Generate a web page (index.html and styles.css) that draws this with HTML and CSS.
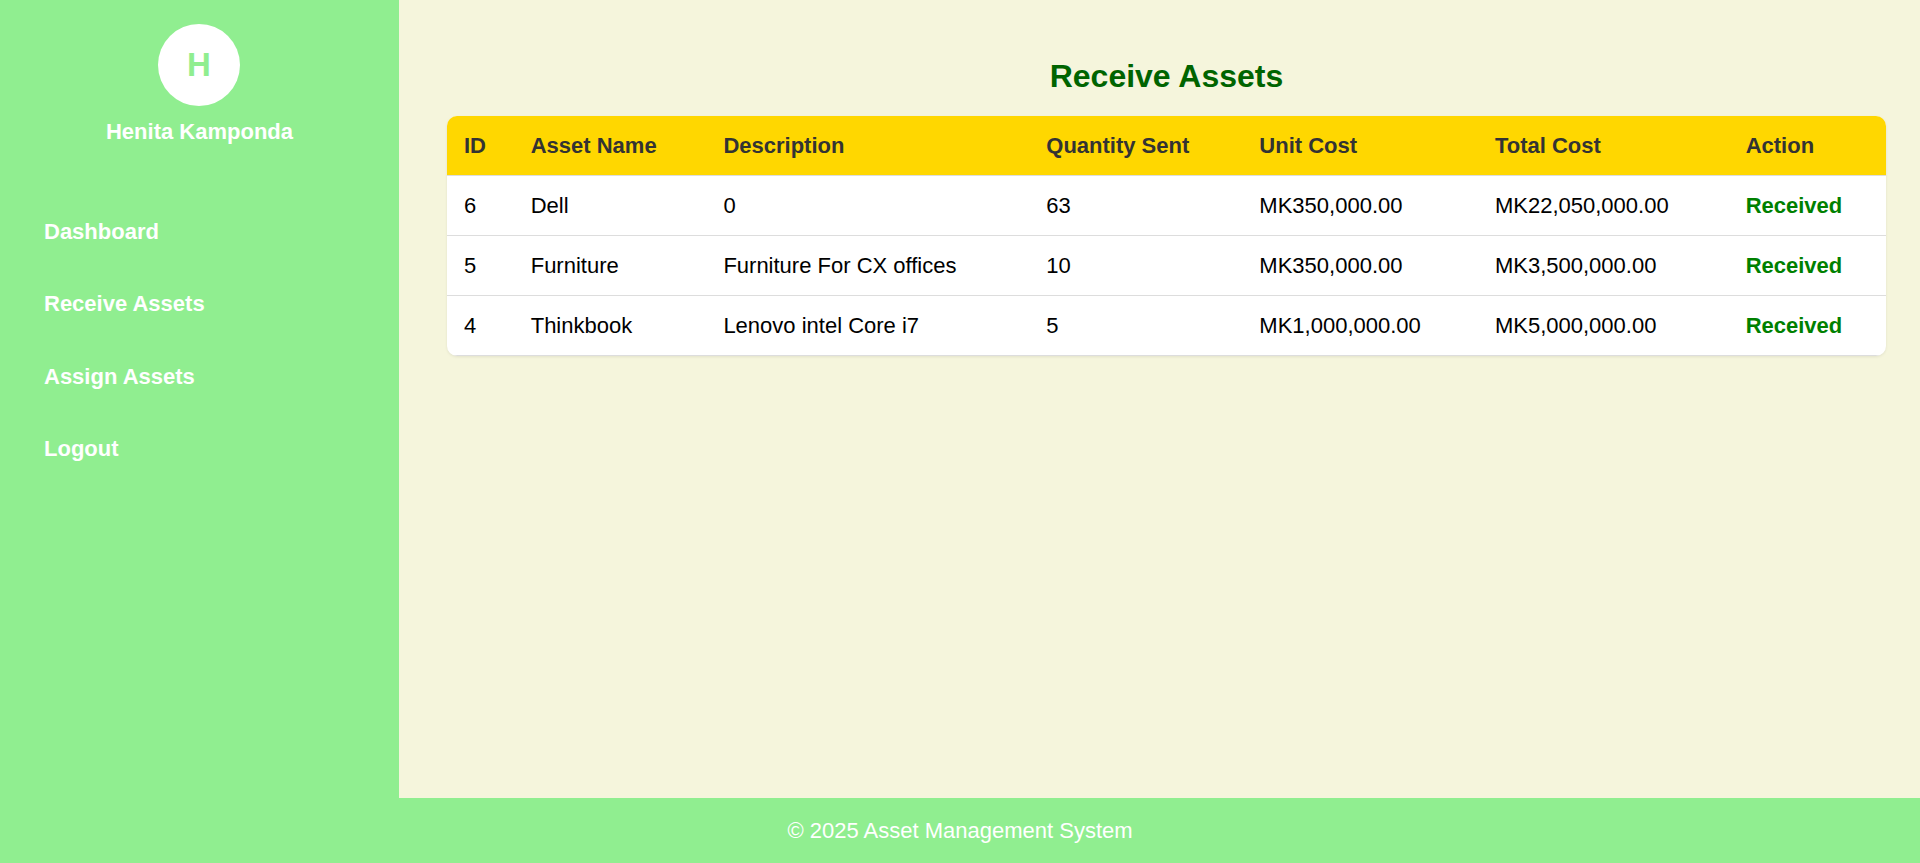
FILE: index.html
```html
<!DOCTYPE html>
<html lang="en">
<head>
<meta charset="utf-8">
<title>Receive Assets</title>
<link rel="stylesheet" href="styles.css">
</head>
<body>
<div class="page">
  <div class="layout">
    <aside class="sidebar">
      <div class="profile">
        <div class="avatar">H</div>
        <div class="name">Henita Kamponda</div>
      </div>
      <nav class="nav">
        <a href="#" class="nav-link">Dashboard</a>
        <a href="#" class="nav-link">Receive Assets</a>
        <a href="#" class="nav-link">Assign Assets</a>
        <a href="#" class="nav-link">Logout</a>
      </nav>
    </aside>
    <main class="main">
      <h2 class="title">Receive Assets</h2>
      <div class="table-wrap">
        <table class="assets">
          <colgroup>
            <col class="c-id"><col class="c-name"><col class="c-desc"><col class="c-qty"><col class="c-unit"><col class="c-total"><col class="c-action">
          </colgroup>
          <thead>
            <tr><th>ID</th><th>Asset Name</th><th>Description</th><th>Quantity Sent</th><th>Unit Cost</th><th>Total Cost</th><th>Action</th></tr>
          </thead>
          <tbody>
            <tr><td>6</td><td>Dell</td><td>0</td><td>63</td><td>MK350,000.00</td><td>MK22,050,000.00</td><td class="received">Received</td></tr>
            <tr><td>5</td><td>Furniture</td><td>Furniture For CX offices</td><td>10</td><td>MK350,000.00</td><td>MK3,500,000.00</td><td class="received">Received</td></tr>
            <tr><td>4</td><td>Thinkbook</td><td>Lenovo intel Core i7</td><td>5</td><td>MK1,000,000.00</td><td>MK5,000,000.00</td><td class="received">Received</td></tr>
          </tbody>
        </table>
      </div>
    </main>
  </div>
  <footer class="footer">© 2025 Asset Management System</footer>
</div>
</body>
</html>
```
FILE: styles.css
```css
* { box-sizing: border-box; }
html, body { margin: 0; padding: 0; }
body {
  font-family: "Liberation Sans", Arial, sans-serif;
  font-size: 22px;
  color: #000;
  background: #F5F5DC;
}
.page {
  display: flex;
  flex-direction: column;
  height: 863px;
}
.layout {
  display: flex;
  height: 798px;
}
.sidebar {
  width: 399px;
  flex: 0 0 399px;
  background: #90EE90;
  padding-top: 24px;
  display: flex;
  flex-direction: column;
}
.profile {
  display: flex;
  flex-direction: column;
  align-items: center;
}
.avatar {
  width: 82px;
  height: 82px;
  border-radius: 50%;
  background: #fff;
  color: #90EE90;
  font-weight: bold;
  font-size: 33px;
  display: flex;
  align-items: center;
  justify-content: center;
  margin-left: -1px;
}
.name {
  margin-top: 13px;
  color: #fff;
  font-weight: bold;
  font-size: 22px;
  line-height: 25px;
}
.nav {
  display: flex;
  flex-direction: column;
  gap: 22.5px;
  margin-top: 62.5px;
}
.nav-link {
  display: block;
  color: #fff;
  font-weight: bold;
  text-decoration: none;
  font-size: 22px;
  line-height: 26px;
  padding: 12px 0 12px 44px;
}
.main {
  flex: 1;
  background: #F5F5DC;
  padding: 58px 34px 0 48px;
}
.title {
  margin: 0 0 21px;
  text-align: center;
  color: #006400;
  font-size: 32px;
  line-height: 37px;
  font-weight: bold;
}
.table-wrap {
  background: #fff;
  border-radius: 10px;
  overflow: hidden;
  box-shadow: 0 1px 3px rgba(0,0,0,0.08);
}
.assets {
  width: 100%;
  border-collapse: collapse;
  table-layout: fixed;
}
.c-id { width: 66.7px; }
.c-name { width: 192.7px; }
.c-desc { width: 322.9px; }
.c-qty { width: 213.1px; }
.c-unit { width: 235.6px; }
.c-total { width: 250.7px; }
.c-action { width: 157.3px; }
.assets th, .assets td {
  text-align: left;
  padding: 17px 17px;
  line-height: 25px;
  border-bottom: 1px solid #ddd;
  white-space: nowrap;
}
.assets th {
  background: #FFD700;
  color: #333;
  font-weight: bold;
}
.assets td { color: #000; }
.assets td.received {
  color: #008000;
  font-weight: bold;
}
.footer {
  height: 65px;
  background: #90EE90;
  color: #fff;
  text-align: center;
  font-size: 22px;
  line-height: 65px;
}
```
